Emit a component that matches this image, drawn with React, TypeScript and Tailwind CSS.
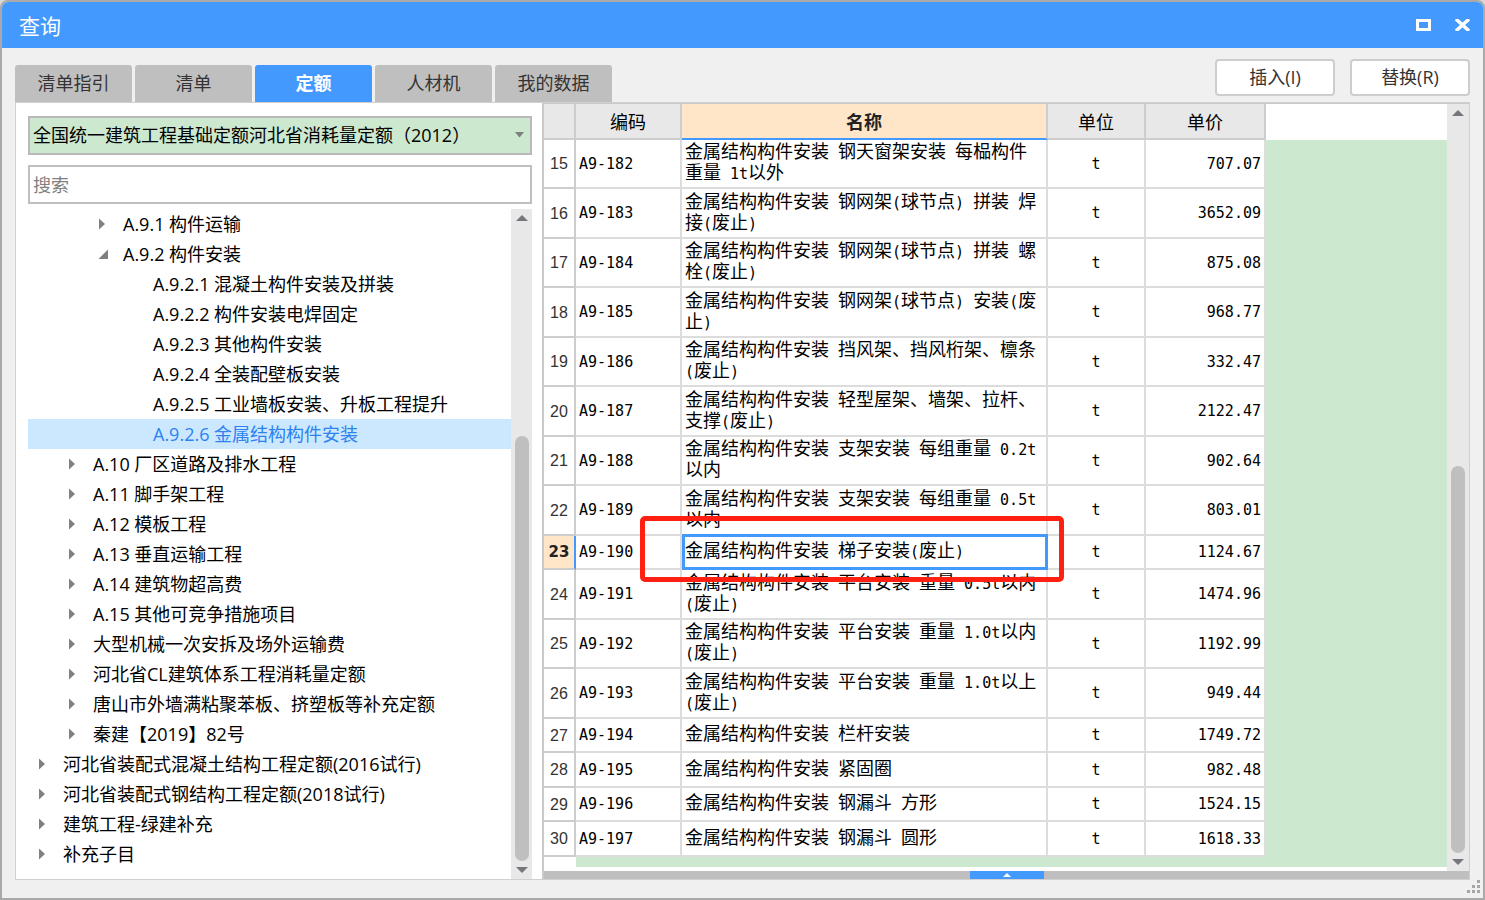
import React, { useState } from 'react';
import clsx from 'clsx';

interface TreeNode {
  label: string;
  level: number;
  state: 'open' | 'closed' | 'leaf';
}

interface QuotaRow {
  no: number;
  code: string;
  lines: string[];
  price: string;
}

const TABS = ['清单指引', '清单', '定额', '人材机', '我的数据'];

const TREE: TreeNode[] = [
  { label: 'A.9.1 构件运输', level: 2, state: 'closed' },
  { label: 'A.9.2 构件安装', level: 2, state: 'open' },
  { label: 'A.9.2.1 混凝土构件安装及拼装', level: 3, state: 'leaf' },
  { label: 'A.9.2.2 构件安装电焊固定', level: 3, state: 'leaf' },
  { label: 'A.9.2.3 其他构件安装', level: 3, state: 'leaf' },
  { label: 'A.9.2.4 全装配壁板安装', level: 3, state: 'leaf' },
  { label: 'A.9.2.5 工业墙板安装、升板工程提升', level: 3, state: 'leaf' },
  { label: 'A.9.2.6 金属结构构件安装', level: 3, state: 'leaf' },
  { label: 'A.10 厂区道路及排水工程', level: 1, state: 'closed' },
  { label: 'A.11 脚手架工程', level: 1, state: 'closed' },
  { label: 'A.12 模板工程', level: 1, state: 'closed' },
  { label: 'A.13 垂直运输工程', level: 1, state: 'closed' },
  { label: 'A.14 建筑物超高费', level: 1, state: 'closed' },
  { label: 'A.15 其他可竞争措施项目', level: 1, state: 'closed' },
  { label: '大型机械一次安拆及场外运输费', level: 1, state: 'closed' },
  { label: '河北省CL建筑体系工程消耗量定额', level: 1, state: 'closed' },
  { label: '唐山市外墙满粘聚苯板、挤塑板等补充定额', level: 1, state: 'closed' },
  { label: '秦建【2019】82号', level: 1, state: 'closed' },
  { label: '河北省装配式混凝土结构工程定额(2016试行)', level: 0, state: 'closed' },
  { label: '河北省装配式钢结构工程定额(2018试行)', level: 0, state: 'closed' },
  { label: '建筑工程-绿建补充', level: 0, state: 'closed' },
  { label: '补充子目', level: 0, state: 'closed' },
];

const ROWS: QuotaRow[] = [
  { no: 15, code: 'A9-182', lines: ['金属结构构件安装 钢天窗架安装 每榀构件', '重量 1t以外'], price: '707.07' },
  { no: 16, code: 'A9-183', lines: ['金属结构构件安装 钢网架(球节点) 拼装 焊', '接(废止)'], price: '3652.09' },
  { no: 17, code: 'A9-184', lines: ['金属结构构件安装 钢网架(球节点) 拼装 螺', '栓(废止)'], price: '875.08' },
  { no: 18, code: 'A9-185', lines: ['金属结构构件安装 钢网架(球节点) 安装(废', '止)'], price: '968.77' },
  { no: 19, code: 'A9-186', lines: ['金属结构构件安装 挡风架、挡风桁架、檩条', '(废止)'], price: '332.47' },
  { no: 20, code: 'A9-187', lines: ['金属结构构件安装 轻型屋架、墙架、拉杆、', '支撑(废止)'], price: '2122.47' },
  { no: 21, code: 'A9-188', lines: ['金属结构构件安装 支架安装 每组重量 0.2t', '以内'], price: '902.64' },
  { no: 22, code: 'A9-189', lines: ['金属结构构件安装 支架安装 每组重量 0.5t', '以内'], price: '803.01' },
  { no: 23, code: 'A9-190', lines: ['金属结构构件安装 梯子安装(废止)'], price: '1124.67' },
  { no: 24, code: 'A9-191', lines: ['金属结构构件安装 平台安装 重量 0.5t以内', '(废止)'], price: '1474.96' },
  { no: 25, code: 'A9-192', lines: ['金属结构构件安装 平台安装 重量 1.0t以内', '(废止)'], price: '1192.99' },
  { no: 26, code: 'A9-193', lines: ['金属结构构件安装 平台安装 重量 1.0t以上', '(废止)'], price: '949.44' },
  { no: 27, code: 'A9-194', lines: ['金属结构构件安装 栏杆安装'], price: '1749.72' },
  { no: 28, code: 'A9-195', lines: ['金属结构构件安装 紧固圈'], price: '982.48' },
  { no: 29, code: 'A9-196', lines: ['金属结构构件安装 钢漏斗 方形'], price: '1524.15' },
  { no: 30, code: 'A9-197', lines: ['金属结构构件安装 钢漏斗 圆形'], price: '1618.33' },
];

const INDENT = ['pl-[10px]', 'pl-[40px]', 'pl-[70px]', 'pl-[100px]'];

// Latin runs are set half as wide as the CJK glyphs so the columns line up
const GridText: React.FC<{ text: string }> = ({ text }) => (
  <>
    {text.split(/([\x20-\x7e]+)/).map((part, i) =>
      i % 2 ? (
        <span key={i} className="text-[15px] leading-none">{part}</span>
      ) : (
        part
      )
    )}
  </>
);

const Expander: React.FC<{ state: TreeNode['state'] }> = ({ state }) => (
  <svg className="w-[10px] h-[12px] shrink-0" viewBox="0 0 10 12" fill="#808080">
    {state === 'closed' && <path d="M1 0.5 L7 6 L1 11.5 Z" />}
    {state === 'open' && <path d="M10 1.5 V11 H0.5 Z" />}
  </svg>
);

const ScrollArrow: React.FC<{ dir: 'up' | 'down' }> = ({ dir }) => (
  <button aria-label={dir === 'up' ? '向上滚动' : '向下滚动'} className="h-[18px] w-full flex items-center justify-center shrink-0">
    <svg className="w-[12px] h-[6px]" viewBox="0 0 12 6" fill="#75757c">
      <path d={dir === 'up' ? 'M6 0 L12 6 H0 Z' : 'M0 0 H12 L6 6 Z'} />
    </svg>
  </button>
);

const TreePane: React.FC = () => {
  const [selected, setSelected] = useState(7);

  return (
    <div className="w-[516px] shrink-0 flex flex-col pl-[12px] pt-[13px]">
      <div className="relative h-[39px] shrink-0">
        <select
          aria-label="定额库"
          className="appearance-none w-full h-full pl-[3px] pr-7 bg-[#cce8cf] border-2 border-[#b9b9b9] text-black focus:outline-none"
        >
          <option>全国统一建筑工程基础定额河北省消耗量定额（2012）</option>
        </select>
        <svg className="absolute right-2 top-4 w-[9px] h-[6px] pointer-events-none" viewBox="0 0 9 6" fill="#808080">
          <path d="M0 0 H9 L4.5 5.5 Z" />
        </svg>
      </div>
      <input
        type="text"
        aria-label="搜索"
        placeholder="搜索"
        className="mt-[10px] h-[39px] shrink-0 pl-[3px] bg-white border-2 border-[#bfbfbf] placeholder:text-[#808080] focus:outline-none"
      />

      <div className="flex flex-1 min-h-0 mt-[5px]">
        <ul role="tree" className="flex-1 min-w-0 overflow-hidden">
          {TREE.map((node, i) => (
            <li
              key={node.label}
              role="treeitem"
              aria-selected={i === selected}
              onClick={() => setSelected(i)}
              className={clsx(
                'flex items-center gap-[15px] h-[30px] whitespace-nowrap cursor-default',
                INDENT[node.level],
                i === selected ? 'bg-[#cce8ff] text-[#2d82f0]' : 'text-black'
              )}
            >
              <Expander state={node.state} />
              <span>{node.label}</span>
            </li>
          ))}
        </ul>
        <div className="w-[21px] flex flex-col bg-[#e8e8e8]">
          <ScrollArrow dir="up" />
          <div className="flex-1 flex flex-col justify-end items-center">
            <div className="w-[14px] h-[67%] rounded-full bg-[#bfbfbf]" />
          </div>
          <ScrollArrow dir="down" />
        </div>
      </div>
    </div>
  );
};

const QuotaTable: React.FC = () => {
  const [active, setActive] = useState(23);
  const head = 'h-[36px] p-0 pt-0.5 font-normal bg-[#e8e8e8] border-r-2 border-b-2 border-[#cdcdcd]';
  const cell = 'p-0 pb-[3px] border-r-2 border-b-2 border-[#dcdcdc]';

  return (
    <table className="w-[722px] shrink-0 table-fixed border-separate border-spacing-0 bg-white text-[18px] leading-[21px] text-black font-['DejaVu_Sans_Mono','Noto_Sans_CJK_SC',monospace]">
      <colgroup>
        <col className="w-[32px]" />
        <col className="w-[106px]" />
        <col className="w-[366px]" />
        <col className="w-[98px]" />
        <col className="w-[120px]" />
      </colgroup>
      <thead>
        <tr>
          <th className={head} aria-label="序号" />
          <th className={head}>编码</th>
          <th className="h-[36px] p-0 pt-0.5 font-bold text-[#222] bg-[#ffe6c8] border-r-2 border-b-2 border-r-[#cdcdcd] border-b-[#4499ff]">名称</th>
          <th className={head}>单位</th>
          <th className={head}>单价</th>
        </tr>
      </thead>
      <tbody>
        {ROWS.map((row) => {
          const isActive = row.no === active;
          return (
            <tr
              key={row.no}
              onClick={() => setActive(row.no)}
              className={row.lines.length > 1 ? 'odd:h-[49px] even:h-[50px]' : 'odd:h-[34px] even:h-[35px]'}
            >
              <td
                className={clsx(
                  'p-0 text-center border-r-2 border-b-2 border-b-[#cdcdcd]',
                  isActive
                    ? "bg-[#ffe6c8] border-r-[#4499ff] text-[15px] font-bold text-[#222] font-['DejaVu_Sans',sans-serif]"
                    : "border-r-[#cdcdcd] text-[16px] text-[#333] font-['Liberation_Sans',sans-serif]"
                )}
              >
                {row.no}
              </td>
              <td className={clsx(cell, 'pl-[3px]')}>
                <GridText text={row.code} />
              </td>
              <td className={clsx(cell, 'relative pl-[3px] whitespace-nowrap')}>
                {row.lines.map((line) => (
                  <div key={line} className="h-[21px]">
                    <GridText text={line} />
                  </div>
                ))}
                {isActive && (
                  <>
                    <div className="absolute -inset-0.5 left-0 border-[3px] border-[#4499ff] pointer-events-none" />
                    <div className="absolute z-10 -top-5 -bottom-3.5 -left-[42px] -right-[18px] border-[5px] border-[#ff2012] rounded-[5px] pointer-events-none" />
                  </>
                )}
              </td>
              <td className={clsx(cell, 'text-center')}>
                <GridText text="t" />
              </td>
              <td className={clsx(cell, 'pr-[3px] text-right')}>
                <GridText text={row.price} />
              </td>
            </tr>
          );
        })}
      </tbody>
    </table>
  );
};

const App: React.FC = () => {
  const [tab, setTab] = useState('定额');

  return (
    <div className="bg-[#d8d8d8]">
      <div className="h-screen flex flex-col overflow-hidden bg-[#f0f0f0] border-2 border-[#a9a9a9] rounded-t-lg text-[18px] font-['Open_Sans','Noto_Sans_CJK_SC',sans-serif]">
        {/* Title bar */}
        <header className="h-[46px] shrink-0 flex items-center justify-between pl-[17px] pr-[13px] bg-[#4499ff] text-white">
          <h1 className="pt-1 text-[21px]">查询</h1>
          <div className="flex items-center gap-6">
            <button aria-label="最大化">
              <svg className="w-[15px] h-[12px]" viewBox="0 0 15 12" fill="none" stroke="currentColor" strokeWidth="3">
                <path d="M1.5 1.5 H13.5 V10.5 H1.5 Z" />
              </svg>
            </button>
            <button aria-label="关闭">
              <svg className="w-[15px] h-[12px]" viewBox="0 0 15 12" fill="none" stroke="currentColor" strokeWidth="3.4">
                <path d="M1 0 L14 12 M14 0 L1 12" />
              </svg>
            </button>
          </div>
        </header>

        {/* Tabs and actions */}
        <div className="h-[54px] shrink-0 flex items-end justify-between px-[13px]">
          <div role="tablist" className="flex gap-[3px]">
            {TABS.map((name) => (
              <button
                key={name}
                role="tab"
                aria-selected={name === tab}
                onClick={() => setTab(name)}
                className={clsx(
                  'w-[117px] h-[37px] rounded-t-[3px]',
                  name === tab ? 'bg-[#4499ff] text-white font-bold' : 'bg-[#bfbfbf] text-[#333]'
                )}
              >
                {name}
              </button>
            ))}
          </div>
          <div className="flex gap-[15px] pb-[6px]">
            {['插入(I)', '替换(R)'].map((name) => (
              <button key={name} className="w-[120px] h-[37px] bg-white border-2 border-[#cdcdcd] rounded text-[#333]">
                {name}
              </button>
            ))}
          </div>
        </div>

        {/* Content */}
        <main className="flex-1 min-h-0 mx-[13px] mb-[18px] flex bg-white border border-[#d0d0d0]">
          <TreePane />
          <section className="flex-1 min-w-0 ml-[10px] flex flex-col border-l-2 border-t border-[#c9c9c9]">
            <div className="flex-1 min-h-0 flex">
              <div className="flex-1 min-w-0 flex flex-col">
                <div className="flex">
                  <QuotaTable />
                  <div className="flex-1 mt-[36px] bg-[#cce8cf]" />
                </div>
                <div className="flex-1 ml-[32px] mb-1 bg-[#cce8cf]" />
              </div>
              <div className="w-[22px] pr-px flex flex-col bg-[#e8e8e8]">
                <ScrollArrow dir="up" />
                <div className="flex-1 flex flex-col justify-end items-center">
                  <div className="w-[14px] h-[53%] rounded-full bg-[#bfbfbf]" />
                </div>
                <ScrollArrow dir="down" />
              </div>
            </div>
            <div className="h-[8px] shrink-0 flex justify-center bg-[#bfbfbf]">
              <button aria-label="展开详情" className="w-[74px] h-full flex items-center justify-center bg-[#4499ff]">
                <svg className="w-[8px] h-[4px]" viewBox="0 0 8 4" fill="#fff">
                  <path d="M4 0 L8 4 H0 Z" />
                </svg>
              </button>
            </div>
          </section>
        </main>

        {/* Resize grip */}
        <svg className="fixed right-[5px] bottom-[7px] w-[13px] h-[13px]" viewBox="0 0 13 13" fill="#a6a6a6">
          <path d="M10 0h3v3h-3z M5 5h3v3h-3z M10 5h3v3h-3z M0 10h3v3h-3z M5 10h3v3h-3z M10 10h3v3h-3z" />
        </svg>
      </div>
    </div>
  );
};

export default App;
